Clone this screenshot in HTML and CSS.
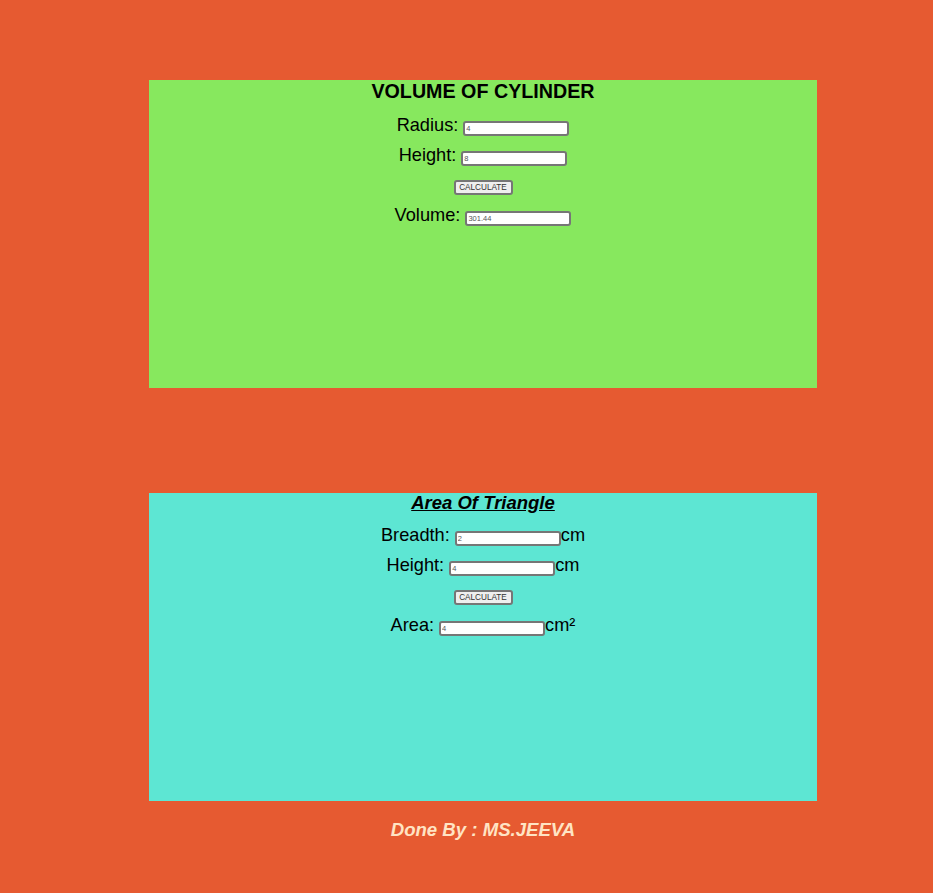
FILE: index.html
```html
<!DOCTYPE html>
<html>
<head>
<meta charset="utf-8">
<link rel="stylesheet" href="styles.css">
</head>
<body>
<div class="box box-green">
  <h2 class="title">VOLUME OF CYLINDER</h2>
  <div class="row">Radius: <input class="field" type="text" value="4"></div>
  <div class="row">Height: <input class="field" type="text" value="8"></div>
  <div class="row"><button class="btn">CALCULATE</button></div>
  <div class="row">Volume: <input class="field" type="text" value="301.44"></div>
</div>
<div class="box box-cyan">
  <h2 class="title title-tri">Area Of Triangle</h2>
  <div class="row">Breadth: <input class="field" type="text" value="2">cm</div>
  <div class="row">Height: <input class="field" type="text" value="4">cm</div>
  <div class="row"><button class="btn">CALCULATE</button></div>
  <div class="row">Area: <input class="field" type="text" value="4">cm²</div>
</div>
<p class="footer">Done By : MS.JEEVA</p>
</body>
</html>
```
FILE: styles.css
```css
html, body {
  margin: 0;
  padding: 0;
}
body {
  background: #e65a31;
  font-family: "Liberation Sans", Arial, sans-serif;
  padding-top: 80px;
  padding-left: 149px;
  min-height: 893px;
  box-sizing: border-box;
}
.box {
  width: 668px;
  height: 308px;
  text-align: center;
  color: #000;
}
.box-green {
  background: #87e85e;
  margin-bottom: 105px;
}
.box-cyan {
  background: #5de6d3;
}
.title {
  margin: 0 0 8px 0;
  font-size: 19.7px;
  line-height: 22px;
  font-weight: bold;
}
.title-tri {
  font-size: 18.5px;
  line-height: 20px;
  margin-bottom: 7px;
  font-style: italic;
  text-decoration: underline;
}
.row {
  height: 30px;
  line-height: 30px;
  font-size: 18.2px;
  white-space: nowrap;
}
.field {
  box-sizing: border-box;
  width: 106px;
  height: 15px;
  border: 2px solid #767676;
  border-radius: 3px;
  padding: 0 1px;
  font-family: "Liberation Sans", Arial, sans-serif;
  font-size: 7.5px;
  color: #555;
  background: #fff;
  vertical-align: baseline;
  margin: 0;
}
.btn {
  box-sizing: border-box;
  width: 59px;
  height: 15px;
  border: 2px solid #767676;
  border-radius: 3px;
  background: #efefef;
  font-family: "Liberation Sans", Arial, sans-serif;
  font-size: 8.2px;
  color: #333;
  padding: 0;
  vertical-align: middle;
  line-height: 11px;
  position: relative;
  top: 1px;
}
.footer {
  width: 668px;
  text-align: center;
  margin: 18px 0 0 0;
  font-size: 18.6px;
  line-height: 22px;
  font-weight: bold;
  font-style: italic;
  color: #ffe4c4;
}
```
